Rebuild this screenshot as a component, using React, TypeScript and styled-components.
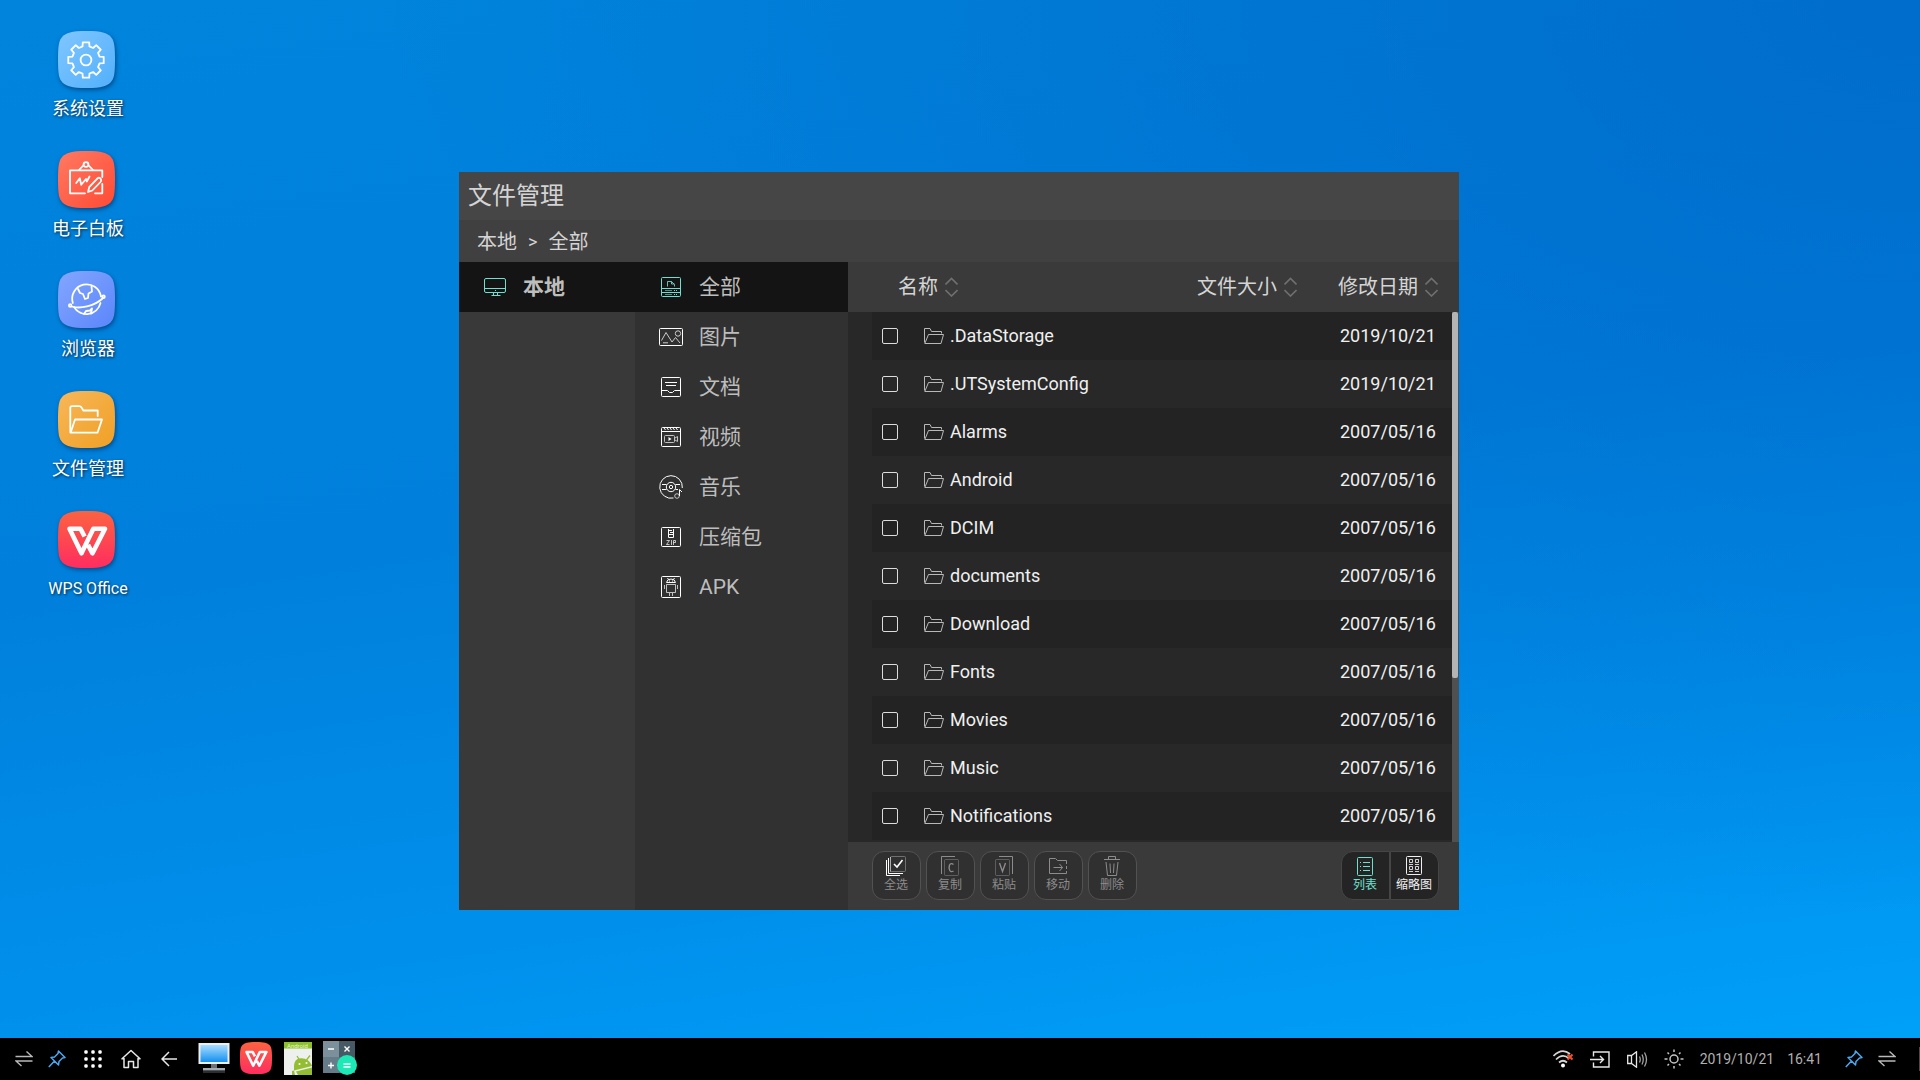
import React, { useState } from "react";
import styled, { createGlobalStyle, css } from "styled-components";

const FONT = `Roboto, "Noto Sans CJK SC", sans-serif`;
const ACCENT = "#6fe0cf";

const GlobalStyle = createGlobalStyle`
  *, *::before, *::after { box-sizing: border-box; }
  body { margin: 0; font-family: ${FONT}; }
  button, input { font: inherit; color: inherit; }
  button { border: 0; padding: 0; background: none; cursor: pointer; }
  svg { display: block; flex: none; }
`;

const Screen = styled.div`
  position: relative;
  display: flex;
  flex-direction: column;
  min-height: 100vh;
  overflow: hidden;
  background:
    radial-gradient(ellipse 80% 85% at 100% 0%, rgba(0, 90, 190, 0.55), rgba(0, 90, 190, 0) 100%),
    linear-gradient(172deg, #0084dc 0%, #0080dc 45%, #0090ec 75%, #00a2fa 100%);
`;

const Desktop = styled.nav`
  flex: 1;
  display: flex;
  flex-direction: column;
  align-items: flex-start;
  gap: 30px;
  padding: 31px 38px;
`;

const Shortcut = styled.a`
  display: flex;
  flex-direction: column;
  align-items: center;
  width: 100px;
  height: 90px;
  gap: 9px;
  color: #fff;
  text-decoration: none;
  font-size: ${(p: { $latin?: boolean }) => (p.$latin ? 16 : 18)}px;
  line-height: 24px;
  white-space: nowrap;
  text-shadow: 1px 1px 3px rgba(0, 0, 0, 0.75);

  svg {
    margin-right: 3px;
    filter: drop-shadow(1px 2px 2px rgba(0, 20, 60, 0.5));
  }
`;

const Window = styled.main`
  position: absolute;
  left: 459px;
  top: 172px;
  width: 1000px;
  color: #d4d4d4;
  background: #3a3a3a;
`;

const TitleBar = styled.header`
  display: flex;
  align-items: center;
  height: 48px;
  padding: 0 9px;
  background: #464646;

  h1 {
    margin: 0;
    font-size: 24px;
    font-weight: 400;
    line-height: 32px;
  }
`;

const Breadcrumb = styled.nav`
  display: flex;
  align-items: center;
  gap: 11px;
  height: 42px;
  padding: 2px 18px 0;
  background: #404040;
  font-size: 20px;
  line-height: 28px;

  a { color: inherit; text-decoration: none; }
  span { font-size: 18px; }
`;

const Columns = styled.div`
  display: grid;
  grid-template-columns: 176px 213px 1fr;
`;

const Sidebar = styled.nav<{ $tone: string }>`
  display: flex;
  flex-direction: column;
  background: ${(p) => p.$tone};
`;

const SideItem = styled.button<{ $active?: boolean; $bold?: boolean }>`
  display: flex;
  align-items: center;
  gap: 16px;
  height: 50px;
  padding-left: 24px;
  color: #bdbdbd;
  font-size: 21px;
  font-weight: ${(p) => (p.$bold ? 700 : 400)};
  line-height: 28px;
  background: ${(p) => (p.$active ? "#141414" : "transparent")};

  svg { color: ${(p) => (p.$active ? ACCENT : "#fff")}; }
`;

const Content = styled.section`
  display: flex;
  flex-direction: column;
`;

const ListArea = styled.div`
  display: grid;
  grid-template-columns: 1fr 7px;
`;

const FileTable = styled.table`
  display: block;
  border-collapse: collapse;

  thead, tbody { display: block; }
  tbody { height: 530px; padding-left: 24px; background: #282828; }
  th, td { padding: 0; font-weight: 400; text-align: left; }
`;

const HeadRow = styled.tr`
  display: grid;
  grid-template-columns: 1fr 141px 114px;
  align-items: center;
  height: 50px;
  padding-left: 50px;
`;

const SortButton = styled.button`
  display: flex;
  align-items: center;
  gap: 7px;
  font-size: 20px;
  line-height: 28px;
  white-space: nowrap;

  svg { color: #707070; }
`;

const FileRow = styled.tr`
  display: grid;
  grid-template-columns: 42px 1fr 112px;
  align-items: center;
  height: 48px;
  padding-left: 10px;
  color: #f0f0f0;
  font-size: 18px;
  line-height: 24px;

  &:nth-child(odd) { background: #232323; }
`;

const Check = styled.input`
  appearance: none;
  display: block;
  width: 16px;
  height: 16px;
  margin: 0;
  border: 1px solid #dcdcdc;
  border-radius: 2px;

  &:checked { background: ${ACCENT}; }
`;

const FileName = styled.label`
  display: flex;
  align-items: center;
  gap: 6px;

  svg { color: #b8b8b8; }
`;

const ScrollTrack = styled.div`
  margin-top: 50px;
  padding-right: 1px;
  background: #505050;
`;

const ScrollThumb = styled.div`
  height: 69%;
  border-radius: 2px;
  background: #b4b4b4;
`;

const Footer = styled.footer`
  display: flex;
  justify-content: space-between;
  padding: 9px 20px 10px 24px;
`;

const ButtonGroup = styled.div`
  display: flex;
  gap: 5px;
`;

const toolFace = css`
  display: flex;
  flex-direction: column;
  align-items: center;
  width: 49px;
  height: 49px;
  padding-top: 3px;
  padding-right: 1px;
  border: 1px solid #525252;
  font-size: 12px;
  line-height: 17px;
  white-space: nowrap;
`;

const ToolButton = styled.button`
  ${toolFace}
  border-radius: 12px;
  background: #303030;
  color: #8c8c8c;
`;

const ViewButton = styled.button<{ $active?: boolean }>`
  ${toolFace}
  border-color: #464646;
  background: #242424;
  color: ${(p) => (p.$active ? ACCENT : "#f0f0f0")};

  &:first-child { border-radius: 12px 0 0 12px; }
  &:last-child { border-radius: 0 12px 12px 0; }
`;

const ViewSwitch = styled.div`
  display: flex;
`;

const Taskbar = styled.footer`
  display: flex;
  justify-content: space-between;
  height: 42px;
  padding-left: 6px;
  background: #000;
  color: #e8e8e8;
`;

const TaskGroup = styled.div<{ $start?: number }>`
  display: flex;
  align-items: center;
  margin-left: ${(p) => p.$start ?? 0}px;
`;

const TaskButton = styled.button<{ $w: number; $app?: boolean }>`
  display: flex;
  align-items: center;
  justify-content: center;
  width: ${(p) => p.$w}px;
  height: 42px;
  padding-bottom: ${(p) => (p.$app ? 2 : 0)}px;
`;

const Clock = styled.time`
  display: flex;
  gap: 13px;
  padding: 0 17px 0 7px;
  color: #b0b0b0;
  font-size: 14px;
  line-height: 20px;
`;

const EdgeMark = styled.div`
  width: 1px;
  height: 24px;
  margin-left: 14px;
  background: #4a4a4a;
`;

/* ---------- drawings ---------- */

const SQUIRCLE =
  "M28.5 0C44 0 49 2 52.500 5.500C56 9 57 14 57 28.500C57 43 56 48 52.500 51.500C49 55 44 57 28.500 57C13 57 8 55 4.500 51.500C1 48 0 43 0 28.500C0 14 1 9 4.500 5.500C8 2 13 0 28.500 0Z";

function Tile({ id, from, to, vertical, size = 57, children }: {
  id: string; from: string; to: string; vertical?: boolean; size?: number; children: React.ReactNode;
}) {
  return (
    <svg width={size} height={size} viewBox="0 0 57 57" fill="none" stroke="#fff" strokeWidth="1.8" strokeLinejoin="round" strokeLinecap="round" aria-hidden="true">
      <defs>
        <linearGradient id={id} x1="0" y1="0" x2={vertical ? "0" : "1"} y2="1">
          <stop offset="0" stopColor={from} />
          <stop offset="1" stopColor={to} />
        </linearGradient>
      </defs>
      <path d={SQUIRCLE} fill={`url(#${id})`} stroke="none" />
      {children}
    </svg>
  );
}

function gearPath(cx: number, cy: number) {
  const points: string[] = [];
  for (let tooth = 0; tooth < 8; tooth++) {
    const mid = (tooth * Math.PI) / 4 - Math.PI / 2;
    [[-0.25, 14], [-0.18, 18], [0.18, 18], [0.25, 14]].forEach(([da, r]) => {
      points.push(`${(cx + r * Math.cos(mid + da)).toFixed(2)} ${(cy + r * Math.sin(mid + da)).toFixed(2)}`);
    });
  }
  return `M${points.join("L")}Z`;
}

const GearTile = () => (
  <Tile id="gear" from="#80c6ff" to="#52b0fb">
    <path d={gearPath(28, 29)} />
    <circle cx="28" cy="29" r="5.400" />
  </Tile>
);

const BoardTile = () => (
  <Tile id="board" from="#ff7a62" to="#ff4a34">
    <path d="M27 42.300H12V19.300H44.300V26M44.300 33V42.300H37" />
    <path d="M21 19L25.300 14.500M35 19L30.700 14.500" />
    <circle cx="28" cy="13.500" r="2.400" />
    <path d="M18.200 32L21.800 27.300L23.200 33.800L28 28L28.800 30.500L31.500 25.500" />
    <path d="M30 41L31.200 36.200L39.500 27.300Q41.500 26 43 28.200Q43.500 29.800 42.500 31L34.300 39.500Z" />
  </Tile>
);

const GlobeTile = () => (
  <Tile id="globe" from="#84a6ff" to="#5a86fa">
    <path d="M14.800 32A14.500 14.500 0 1 1 43 25.500M42.500 32A14.500 14.500 0 0 1 16 36" />
    <path d="M13.500 35.500C22 38 36 35.500 44.500 27.500" />
    <circle cx="12.200" cy="34.500" r="1.300" /><circle cx="45.500" cy="25.800" r="1.300" />
    <path d="M20 18L22 22L25 23L27 28L30 27L30.500 22.500L34 20.500L33.500 15.500" />
    <path d="M26 43L28 40L32 39.500L34 37.500L33 42.500" />
  </Tile>
);

const FolderTile = () => (
  <Tile id="folder" from="#f7b75a" to="#f0a024">
    <path d="M12.300 41V17Q12.300 15.200 14 15.200H21.500Q23 15.200 24 17.200L25.300 19.500H39.700V25" />
    <path d="M17 28.500H44L39.500 41.700H12.600Z" />
  </Tile>
);

const Wps = () => (
  <path d="M26.600 25.500L22.500 17.700H11.500L23.500 42.300L35.300 17.700H47L34.500 42.300L30 33.800" strokeWidth="4.600" strokeLinecap="butt" />
);

const WpsTile = () => <Tile id="wps" from="#fb6340" to="#ff2d60" vertical><Wps /></Tile>;

const line = { fill: "none", stroke: "currentColor", "aria-hidden": true } as const;

const MonitorIcon = () => (
  <svg width="24" height="24" viewBox="0 0 24 24" {...line}>
    <rect x="1.500" y="3.500" width="21" height="14" rx="1.500" />
    <path d="M2 13.500H22M8.500 20.500H17.500M10.500 18V20M14.500 18V20M12 15.500H13" />
  </svg>
);

const AllIcon = () => (
  <svg width="24" height="24" viewBox="0 0 24 24" {...line}>
    <rect x="2.500" y="2.500" width="19" height="19" rx="1" />
    <path d="M2 13.500H22M2 17.500H22M15 15.500H16M17 15.500H18M15 19.500H16M17 19.500H18" />
    <path d="M6 15.500H13M6 19.500H13" opacity="0.600" />
    <path d="M8.500 11.500V6.500H12.500L15.500 9.500V11.500M12.500 6.500V9H15.500" opacity="0.850" />
  </svg>
);

const ImageIcon = () => (
  <svg width="24" height="24" viewBox="0 0 24 24" {...line}>
    <rect x="0.500" y="3.500" width="23" height="17" rx="1" />
    <g opacity="0.750"><circle cx="19" cy="8.500" r="2.700" />
    <path d="M2.500 15.500L7 7.500L13 17L16.500 12.500L21 18M4 17.800H9" /></g>
  </svg>
);

const DocIcon = () => (
  <svg width="24" height="24" viewBox="0 0 24 24" {...line}>
    <rect x="2.500" y="2.500" width="19" height="19" rx="1" />
    <path d="M6 7.500H18M7 10.500H17M2.500 15.500H8.500L10.500 17.500H13.500L15.500 15.500H21.500" />
  </svg>
);

const VideoIcon = () => (
  <svg width="24" height="24" viewBox="0 0 24 24" {...line}>
    <rect x="2.500" y="2.500" width="19" height="19" rx="1" />
    <path d="M2.500 6.500H21.500M5 3L6.500 5M8 3L9.500 5M11 3L12.500 5M14 3L15.500 5M17 3L18.500 5" />
    <g opacity="0.700"><rect x="5.500" y="10.500" width="10" height="7" rx="1" />
    <path d="M16 13L18.500 11.500V16.500L16 15" /></g>
    <path d="M9.500 12V16L12.500 14Z" fill="currentColor" stroke="none" />
  </svg>
);

const MusicIcon = () => (
  <svg width="24" height="24" viewBox="0 0 24 24" {...line}>
    <path d="M23.300 13A11.300 11.300 0 1 0 14.500 23" />
    <circle cx="12" cy="12" r="4.700" /><circle cx="12" cy="12" r="1.700" />
    <path d="M3 9.500H7.500M3 14.500H7.500M16.500 9.500H21M16.500 14.500H19M20.500 21V14.500L23 17" />
    <circle cx="18" cy="21" r="2.300" opacity="0.700" />
  </svg>
);

const ZipIcon = () => (
  <svg width="24" height="24" viewBox="0 0 24 24" {...line}>
    <rect x="2.500" y="2.500" width="19" height="19" rx="1" />
    <path d="M9.500 4V12.500H14.500V4M10 5.500H13M11 7.500H14M10 9.500H14" />
    <path d="M7.500 15.500H10.500L7.500 19.500H10.500M12.500 15V20M14.500 20V15.500H16.500V17.500H14.500" opacity="0.700" />
  </svg>
);

const ApkIcon = () => (
  <svg width="24" height="24" viewBox="0 0 24 24" {...line}>
    <rect x="2.500" y="1.500" width="19" height="21" rx="1" />
    <path d="M7.500 7.500Q8 4 12 4T16.500 7.500ZM8.500 3L9.500 4.500M15.500 3L14.500 4.500M10 6H11M13 6H14" />
    <path d="M7.500 9.500H16.500V17.500H7.500ZM5.500 10V14M18.500 10V14M10.500 18V21M13.500 18V21" opacity="0.700" />
  </svg>
);

const SortIcon = () => (
  <svg width="13" height="20" viewBox="0 0 13 20" {...line} strokeWidth="1.600">
    <path d="M0.500 7.500L6.500 1.500L12.500 7.500M0.500 13L6.500 19L12.500 13" />
  </svg>
);

const FolderIcon = () => (
  <svg width="20" height="16" viewBox="0 0 20 16" {...line}>
    <path d="M0.500 14.500V0.500H6L7.500 3.500H17.500V5.500" />
    <path d="M4.500 6.500H19.500L17 15.500H0.800Z" />
  </svg>
);

const SelectAllIcon = () => (
  <svg width="20" height="22" viewBox="0 0 20 22" {...line}>
    <g stroke="#fff"><path d="M0.500 5V20.500H14M2.500 3V18.500H17M4.500 2V16.500" />
    <path d="M8 9L11 12L16.500 5" strokeWidth="1.600" /></g>
    <rect x="4.500" y="1.500" width="15" height="15" rx="1" opacity="0.700" />
  </svg>
);

const PageStackIcon = ({ letter }: { letter: "C" | "V" }) => (
  <svg width="20" height="22" viewBox="0 0 20 22" {...line}>
    {letter === "C" ? (
      <>
        <path d="M1.500 19V1.500H15" /><rect x="4.500" y="4.500" width="14" height="16" rx="1" opacity="0.500" />
        <path d="M13.500 9.500Q11 7.500 9.500 10Q8.500 13 9.800 15.500Q11 17.500 13.500 16" strokeWidth="1.400" />
      </>
    ) : (
      <>
        <path d="M5 1.500H18.500V19" /><rect x="1.500" y="4.500" width="14" height="16" rx="1" opacity="0.500" />
        <path d="M5.500 8L8.500 16.500L11.500 8" strokeWidth="1.400" />
      </>
    )}
  </svg>
);

const MoveIcon = () => (
  <svg width="20" height="22" viewBox="0 0 20 22" {...line}>
    <path d="M18.500 9V5.500H9.500L7.500 3.500H1.500V18.500H18.500V16M18.500 11V14M5.500 12.500H14.500M11.500 9L14.500 12.500L11.500 16" />
  </svg>
);

const TrashIcon = () => (
  <svg width="20" height="22" viewBox="0 0 20 22" {...line}>
    <path d="M2 4.500H18M6.500 4V1.500H13.500V4M4 7L5.500 20.500H14.500L16 7M8 8.500L8.500 18M12 8.500L11.500 18" />
  </svg>
);

const ListIcon = () => (
  <svg width="20" height="22" viewBox="0 0 20 22" {...line}>
    <rect x="2.500" y="2.500" width="15" height="18" rx="1" />
    <path d="M5 7.500H6M8 7.500H15M5 11.500H6M8 11.500H15M5 15.500H6M8 15.500H15" />
  </svg>
);

const GridIcon = () => (
  <svg width="20" height="22" viewBox="0 0 20 22" {...line}>
    <rect x="2.500" y="1.500" width="15" height="18" rx="1" />
    <path d="M5.500 4.500H8.500V7.500H5.500ZM11.500 4.500H14.500V7.500H11.500ZM5.500 11.500H8.500V14.500H5.500ZM11.500 11.500H14.500V14.500H11.500ZM5 9.500H9M11 9.500H15M5 16.500H9M11 16.500H15" opacity="0.850" />
  </svg>
);

const SwapIcon = () => (
  <svg width="18" height="18" viewBox="0 0 18 18" {...line} strokeWidth="1.400" opacity="0.800">
    <path d="M0.500 6.500H17L11.500 1.500M17.500 11H1L6.500 16" />
  </svg>
);

const PinIcon = () => (
  <svg width="18" height="18" viewBox="0 0 18 18" {...line} stroke="#4aa8f0" strokeWidth="1.500" strokeLinejoin="round">
    <path d="M10.500 1L17 7.500L14.500 8L11 11.500L10.500 15L3 7.500L6.500 7L10 3.500ZM6.500 11L0.800 17" />
  </svg>
);

const AppsIcon = () => (
  <svg width="18" height="18" viewBox="0 0 18 18" fill="#fff" aria-hidden="true">
    {[2, 9, 16].map((y) => [2, 9, 16].map((x) => <rect key={`${x}-${y}`} x={x - 1.700} y={y - 1.700} width="3.400" height="3.400" rx="1.200" />))}
  </svg>
);

const HomeIcon = () => (
  <svg width="20" height="20" viewBox="0 0 20 20" {...line} strokeWidth="1.500" strokeLinejoin="round" strokeLinecap="round">
    <path d="M3 9.500L1 9.800L10 1.500L19 9.800L17 9.500V18.500H12.500V12.500H7.500V18.500H3Z" />
  </svg>
);

const BackIcon = () => (
  <svg width="16" height="16" viewBox="0 0 16 16" {...line} strokeWidth="1.500">
    <path d="M16 8H1M8 1L1 8L8 15" />
  </svg>
);

const ComputerApp = () => (
  <svg width="32" height="32" viewBox="0 0 32 32" aria-hidden="true">
    <defs>
      <linearGradient id="lcd" x1="0" y1="0" x2="0" y2="1"><stop offset="0" stopColor="#a8dcff" /><stop offset="1" stopColor="#1590f0" /></linearGradient>
    </defs>
    <rect x="0.500" y="1" width="31" height="21" fill="#eceeef" />
    <rect x="2.500" y="3" width="27" height="17" fill="url(#lcd)" />
    <path d="M13 22H19V26H13Z" fill="#6a7176" />
    <path d="M5 26H27V28.500H5Z" fill="#a4abb0" />
    <path d="M5 29H27V31H5Z" fill="#2a2e30" />
  </svg>
);

const WpsApp = () => <Tile id="wps-app" from="#fb6340" to="#ff2d60" vertical size={32}><Wps /></Tile>;

const AndroidLabel = styled.text`
  font-family: ${FONT};
  font-size: 6px;
  fill: #e6f5cc;
`;

const ApkApp = () => (
  <svg width="28" height="33" viewBox="0 0 28 33" aria-hidden="true">
    <rect width="28" height="33" fill="#eef0ee" />
    <rect width="28" height="6.500" fill="#8cc02c" />
    <AndroidLabel x="3" y="5.500">Android</AndroidLabel>
    <path d="M10 25C10 18 14 15.500 19 16.500C24 17 27 21 28 24L10 28.500Z" fill="#93bd32" />
    <path d="M12 29.500L28 25.500V33H14ZM8 29L10 28.500L11 33H8Z" fill="#93bd32" />
    <path d="M13 14L15.500 18M26 13.500L22.500 18" stroke="#93bd32" strokeWidth="1.300" />
    <circle cx="15.500" cy="22" r="1" fill="#fff" /><circle cx="22.500" cy="21" r="1" fill="#fff" />
  </svg>
);

const CalculatorApp = () => (
  <svg width="34" height="36" viewBox="0 0 34 36" aria-hidden="true">
    <rect y="1" width="16" height="16" fill="#7b909b" /><rect x="16" y="1" width="16" height="16" fill="#455a64" />
    <rect y="17" width="16" height="16" fill="#667d89" /><rect x="16" y="17" width="16" height="16" fill="#546e7a" />
    <circle cx="24" cy="25" r="10" fill="#1de9b6" />
    <path d="M5 9H11M21.500 6.500L26.500 11.500M26.500 6.500L21.500 11.500M5 25.500H11M8 22.500V28.500M20.500 24H27.500M20.500 27H27.500" stroke="#fff" strokeWidth="1.400" />
  </svg>
);

const WifiIcon = () => (
  <svg width="20" height="18" viewBox="0 0 20 18" fill="none" aria-hidden="true">
    <path d="M0.500 6Q9 -2.500 17 4M3 9.500Q9.500 3 16 8.500M6 12.500Q10 9 14 12.500" stroke="#d4d4d4" strokeWidth="1.700" />
    <circle cx="10" cy="15.500" r="2" fill="#fff" />
    <path d="M14.500 4.500L19.500 9.500M19.500 4.500L14.500 9.500" stroke="#f0502c" strokeWidth="2" />
  </svg>
);

const InputIcon = () => (
  <svg width="20" height="17" viewBox="0 0 20 17" {...line} strokeWidth="1.400">
    <path d="M3.500 5.500V1H19V16H3.500V11.500M0 8.500H13.500M10 5L13.500 8.500L10 12" />
  </svg>
);

const VolumeIcon = () => (
  <svg width="21" height="17" viewBox="0 0 21 17" {...line} strokeWidth="1.300">
    <path d="M0.700 4.500H4.500L9.500 0.800V16.200L4.500 12.500H0.700ZM4.500 4.500V12.500" />
    <path d="M12.500 5.500Q14 8.500 12.500 11.500M15 3.500Q17.500 8.500 15 13.500M17.500 1.500Q21.500 8.500 17.500 15.500" opacity="0.700" />
  </svg>
);

const SunIcon = () => (
  <svg width="20" height="20" viewBox="0 0 20 20" {...line} strokeWidth="1.500" opacity="0.850">
    <circle cx="10" cy="10" r="4" />
    <path d="M10 0.500V3M10 17V19.500M0.500 10H3.500M16.500 10H19.500M3.500 3.500L5 5M15 15L16.500 16.500M16.500 3.500L15 5M5 15L3.500 16.500" />
  </svg>
);

/* ---------- data ---------- */

const SHORTCUTS = [
  { label: "系统设置", Icon: GearTile },
  { label: "电子白板", Icon: BoardTile },
  { label: "浏览器", Icon: GlobeTile },
  { label: "文件管理", Icon: FolderTile },
  { label: "WPS Office", Icon: WpsTile, latin: true },
];

const CATEGORIES = [
  { label: "全部", Icon: AllIcon },
  { label: "图片", Icon: ImageIcon },
  { label: "文档", Icon: DocIcon },
  { label: "视频", Icon: VideoIcon },
  { label: "音乐", Icon: MusicIcon },
  { label: "压缩包", Icon: ZipIcon },
  { label: "APK", Icon: ApkIcon },
];

const FILES = [
  { name: ".DataStorage", date: "2019/10/21" },
  { name: ".UTSystemConfig", date: "2019/10/21" },
  ...["Alarms", "Android", "DCIM", "documents", "Download", "Fonts", "Movies", "Music", "Notifications"].map(
    (name) => ({ name, date: "2007/05/16" }),
  ),
];

const TOOLS = [
  { label: "全选", icon: <SelectAllIcon /> },
  { label: "复制", icon: <PageStackIcon letter="C" /> },
  { label: "粘贴", icon: <PageStackIcon letter="V" /> },
  { label: "移动", icon: <MoveIcon /> },
  { label: "删除", icon: <TrashIcon /> },
];

export default function App() {
  const [category, setCategory] = useState("全部");
  const [view, setView] = useState("列表");

  return (
    <Screen>
      <GlobalStyle />
      <Desktop>
        {SHORTCUTS.map(({ label, Icon, latin }) => (
          <Shortcut key={label} href="#" $latin={latin}>
            <Icon />
            {label}
          </Shortcut>
        ))}
      </Desktop>

      <Window>
        <TitleBar><h1>文件管理</h1></TitleBar>
        <Breadcrumb>
          <a href="#">本地</a>
          <span>&gt;</span>
          <a href="#">全部</a>
        </Breadcrumb>
        <Columns>
          <Sidebar $tone="#393939">
            <SideItem $active $bold><MonitorIcon />本地</SideItem>
          </Sidebar>
          <Sidebar $tone="#313131">
            {CATEGORIES.map(({ label, Icon }) => (
              <SideItem key={label} $active={label === category} onClick={() => setCategory(label)}>
                <Icon />
                {label}
              </SideItem>
            ))}
          </Sidebar>
          <Content>
            <ListArea>
              <FileTable>
                <thead>
                  <HeadRow>
                    {["名称", "文件大小", "修改日期"].map((label) => (
                      <th key={label} scope="col"><SortButton>{label}<SortIcon /></SortButton></th>
                    ))}
                  </HeadRow>
                </thead>
                <tbody>
                  {FILES.map(({ name, date }) => (
                    <FileRow key={name}>
                      <td><Check type="checkbox" id={`file-${name}`} /></td>
                      <td><FileName htmlFor={`file-${name}`}><FolderIcon />{name}</FileName></td>
                      <td>{date}</td>
                    </FileRow>
                  ))}
                </tbody>
              </FileTable>
              <ScrollTrack><ScrollThumb /></ScrollTrack>
            </ListArea>
            <Footer>
              <ButtonGroup>
                {TOOLS.map(({ label, icon }) => <ToolButton key={label}>{icon}{label}</ToolButton>)}
              </ButtonGroup>
              <ViewSwitch>
                <ViewButton $active={view === "列表"} onClick={() => setView("列表")}><ListIcon />列表</ViewButton>
                <ViewButton $active={view === "缩略图"} onClick={() => setView("缩略图")}><GridIcon />缩略图</ViewButton>
              </ViewSwitch>
            </Footer>
          </Content>
        </Columns>
      </Window>

      <Taskbar>
        <TaskGroup>
          <TaskButton $w={36} aria-label="切换"><SwapIcon /></TaskButton>
          <TaskButton $w={30} aria-label="固定"><PinIcon /></TaskButton>
          <TaskGroup $start={2}>
            <TaskButton $w={38} aria-label="应用"><AppsIcon /></TaskButton>
            <TaskButton $w={38} aria-label="主页"><HomeIcon /></TaskButton>
            <TaskButton $w={38} aria-label="返回"><BackIcon /></TaskButton>
          </TaskGroup>
          <TaskGroup $start={5}>
            <TaskButton $app $w={42} aria-label="电脑"><ComputerApp /></TaskButton>
            <TaskButton $app $w={42} aria-label="WPS"><WpsApp /></TaskButton>
            <TaskButton $app $w={42} aria-label="安装包"><ApkApp /></TaskButton>
            <TaskButton $app $w={42} aria-label="计算器"><CalculatorApp /></TaskButton>
          </TaskGroup>
        </TaskGroup>
        <TaskGroup>
          <TaskButton $w={37} aria-label="无线网络"><WifiIcon /></TaskButton>
          <TaskButton $w={37} aria-label="信号源"><InputIcon /></TaskButton>
          <TaskButton $w={37} aria-label="音量"><VolumeIcon /></TaskButton>
          <TaskButton $w={37} aria-label="亮度"><SunIcon /></TaskButton>
          <Clock><span>2019/10/21</span><span>16:41</span></Clock>
          <TaskButton $w={30} aria-label="固定"><PinIcon /></TaskButton>
          <TaskButton $w={36} aria-label="切换"><SwapIcon /></TaskButton>
          <EdgeMark />
        </TaskGroup>
      </Taskbar>
    </Screen>
  );
}
